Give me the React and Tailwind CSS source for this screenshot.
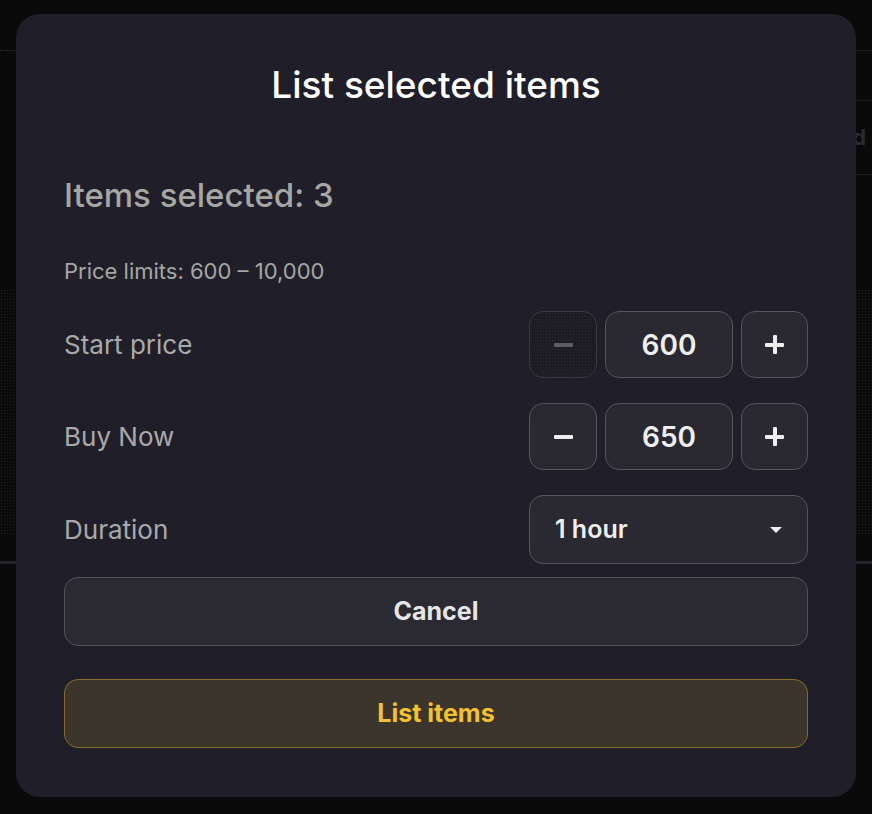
import React, { useState } from 'react'

const font = { fontFamily: 'Inter, "Noto Sans", sans-serif' }

function Bar({ className }) {
  return <span className={'block w-[19px] h-[4px] rounded-[1px] ' + className} />
}

function Stepper({ value, disabled, onMinus, onPlus }) {
  return (
    <div className="flex gap-2">
      <button
        className={
          disabled
            ? 'w-[68px] h-[67px] rounded-[14px] border border-[#3a3940] bg-[#1d1c23] bg-[radial-gradient(#2a2930_1px,transparent_1px)] bg-[length:3px_3px] flex items-center justify-center'
            : 'w-[68px] h-[67px] rounded-[14px] border border-[#55545c] bg-[#2a2931] flex items-center justify-center'
        }
        onClick={onMinus}
        aria-label="decrease"
      >
        <Bar className={disabled ? 'bg-[#5d5c63]' : 'bg-[#eeeeee]'} />
      </button>
      <div className="w-[128px] h-[67px] rounded-[14px] border border-[#55545c] bg-[#2a2931] text-[#eeeeee] text-[28px] font-semibold flex items-center justify-center">
        {value}
      </div>
      <button
        className="relative w-[67px] h-[67px] rounded-[14px] border border-[#55545c] bg-[#2a2931] flex items-center justify-center"
        onClick={onPlus}
        aria-label="increase"
      >
        <Bar className="bg-[#eeeeee]" />
        <span className="absolute w-[4px] h-[19px] rounded-[1px] bg-[#eeeeee]" />
      </button>
    </div>
  )
}

function Row({ label, children }) {
  return (
    <div className="flex items-center justify-between">
      <span className="text-[26px] text-[#a9a9a9]">{label}</span>
      {children}
    </div>
  )
}

export default function App() {
  const [start, setStart] = useState(600)
  const [buyNow, setBuyNow] = useState(650)

  return (
    <div className="relative h-[814px] w-full overflow-hidden bg-[#0a0a0a]" style={font}>
      {/* page behind the dialog */}
      <div className="h-[51px] border-b border-dotted border-[#2c2c2c]" />
      <div className="ml-auto w-[120px] h-[50px] border-b border-dotted border-[#2c2c2c]" />
      <div className="ml-auto w-[120px] h-[74px] border-b border-dotted border-[#2c2c2c] flex items-center justify-end pr-[6px] text-[#2a2a33] text-[22px] font-bold">
        d
      </div>
      <div className="mt-[114px] h-[245px] bg-[radial-gradient(#1e1e1e_1px,transparent_1px)] bg-[length:3px_3px]" />
      <div className="mt-[27px] h-[3px] bg-[#26252c]" />

      {/* dialog */}
      <div className="absolute inset-0 flex justify-center pt-[14px]">
        <div className="w-[840px] h-[783px] rounded-[24px] bg-[#201f29] px-12 pt-[50px] flex flex-col">
          <h1 className="text-center text-[37px] leading-[42px] font-medium text-white">List selected items</h1>
          <p className="mt-[71px] text-[33px] leading-[36px] font-medium text-[#a6a6a3]">Items selected: 3</p>
          <p className="mt-[46px] text-[22px] leading-[24px] text-[#a6a6a3]">Price limits: 600 – 10,000</p>

          <div className="mt-[28px] flex flex-col gap-[25px]">
            <Row label="Start price">
              <Stepper
                value={start}
                disabled={start <= 600}
                onMinus={() => setStart(Math.max(600, start - 50))}
                onPlus={() => setStart(Math.min(10000, start + 50))}
              />
            </Row>
            <Row label="Buy Now">
              <Stepper
                value={buyNow}
                disabled={buyNow <= 600}
                onMinus={() => setBuyNow(Math.max(600, buyNow - 50))}
                onPlus={() => setBuyNow(Math.min(10000, buyNow + 50))}
              />
            </Row>
            <Row label="Duration">
              <button className="w-[279px] h-[69px] rounded-[14px] border border-[#55545c] bg-[#2a2931] pl-[25px] pr-[24px] flex items-center justify-between text-[25px] font-semibold text-[#eeeeee]">
                <span>1 hour</span>
                <svg width="14" height="8" viewBox="0 0 14 8">
                  <path d="M1 1h12L7 7z" fill="#eeeeee" />
                </svg>
              </button>
            </Row>
          </div>

          <button className="mt-[13px] h-[69px] rounded-[14px] border border-[#55545c] bg-[#2b2a33] text-[25px] font-bold text-[#e6e6e6]">
            Cancel
          </button>
          <button className="mt-[33px] h-[69px] rounded-[14px] border border-[#8a6c28] bg-[#3c352b] text-[25px] font-bold text-[#f5c12d]">
            List items
          </button>
        </div>
      </div>
    </div>
  )
}
